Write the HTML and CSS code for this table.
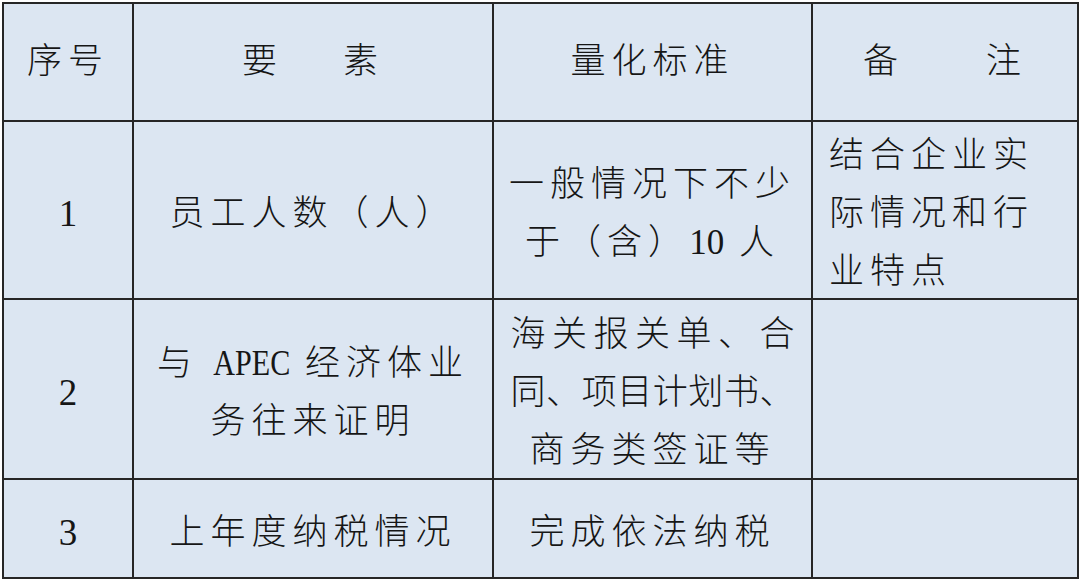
FILE: index.html
```html
<!DOCTYPE html>
<html lang="zh">
<head>
<meta charset="utf-8">
<link rel="stylesheet" href="styles.css">
</head>
<body>
<table class="grid">
  <colgroup>
    <col class="c1"><col class="c2"><col class="c3"><col class="c4">
  </colgroup>
  <tr class="r-head">
    <td>序号</td>
    <td><span class="spread">要</span>素</td>
    <td>量化标准</td>
    <td>备　　注</td>
  </tr>
  <tr class="r-1">
    <td><div class="cell num">1</div></td>
    <td><div class="cell">员工人数（人）</div></td>
    <td><div class="cell"><div class="line">一般情况下不少</div><div class="line">于（含）<span class="latin">10</span> 人</div></div></td>
    <td class="left"><div class="cell"><div class="line">结合企业实</div><div class="line">际情况和行</div><div class="line">业特点</div></div></td>
  </tr>
  <tr class="r-2">
    <td><div class="cell num">2</div></td>
    <td><div class="cell"><div class="line">与 <span class="latin apec">APEC</span> 经济体业</div><div class="line">务往来证明</div></div></td>
    <td><div class="cell">
      <div class="line just"><span>海</span><span>关</span><span>报</span><span>关</span><span>单</span><span>、</span><span>合</span></div>
      <div class="line just"><span>同</span><span>、</span><span>项</span><span>目</span><span>计</span><span>划</span><span>书</span><span>、</span></div>
      <div class="line">商务类签证等</div>
    </div></td>
    <td></td>
  </tr>
  <tr class="r-3">
    <td><div class="cell num">3</div></td>
    <td><div class="cell">上年度纳税情况</div></td>
    <td><div class="cell">完成依法纳税</div></td>
    <td></td>
  </tr>
</table>
</body>
</html>
```

FILE: styles.css
```css
html, body {
  margin: 0;
  padding: 0;
  background: #ffffff;
}

body {
  padding: 2px 0 0 2px;
}

.grid {
  border-collapse: collapse;
  table-layout: fixed;
  width: 1075px;
  background: #dce6f2;
  font-family: "Liberation Serif", "Noto Sans CJK SC", serif;
  font-size: 35px;
  font-weight: 300;
  color: #161616;
  letter-spacing: 6px;
}

.c1 { width: 130px; }
.c2 { width: 360px; }
.c3 { width: 319px; }
.c4 { width: 266px; }

.grid td {
  border: 2px solid #262626;
  text-align: center;
  vertical-align: middle;
  padding: 0;
  line-height: 58px;
}

.r-head td { height: 116px; }
.r-1 td { height: 176px; }
.r-2 td { height: 178px; }
.r-3 td { height: 97px; }

/* nudge glyphs slightly lower without changing the layout height */
.cell {
  padding-top: 4px;
  margin-bottom: -4px;
}

.num {
  font-size: 37px;
  letter-spacing: 0;
}

.latin {
  letter-spacing: 0;
}

.apec {
  display: inline-block;
  transform: scaleX(0.86);
  margin: 0 -6px;
}

.spread {
  display: inline-block;
  margin-right: 60px;
}

.grid td.left {
  text-align: left;
  padding-left: 16px;
}

.line {
  white-space: nowrap;
}

.just {
  display: flex;
  justify-content: space-between;
  width: 284px;
  margin: 0 auto;
  letter-spacing: 0;
}
```
